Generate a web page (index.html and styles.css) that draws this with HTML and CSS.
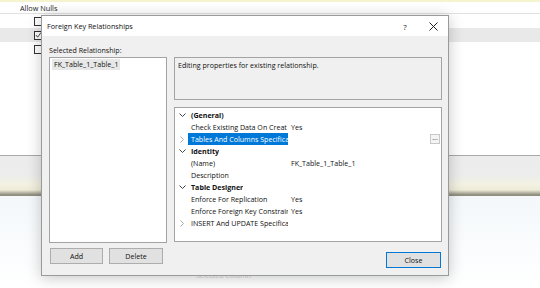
FILE: index.html
```html
<!DOCTYPE html>
<html>
<head>
<meta charset="utf-8">
<link rel="stylesheet" href="styles.css">
</head>
<body>
<div class="page">
  <div class="topline"></div>
  <div class="hdr"><span class="hdr-text">Allow Nulls</span></div>
  <div class="row"><span class="cb"></span></div>
  <div class="row sel"><span class="cb checked"><svg width="8" height="8" viewBox="0 0 8 8"><polyline points="1,4 3,6.5 7,1" fill="none" stroke="#333" stroke-width="1"/></svg></span></div>
  <div class="row"><span class="cb"></span></div>
  <div class="band"></div>
  <div class="lower"><span class="ghost">Selected Column</span></div>
</div>

<div class="dialog">
  <div class="titlebar">
    <span class="title">Foreign Key Relationships</span>
    <span class="tb-help">?</span>
    <span class="tb-close"><svg width="9" height="9" viewBox="0 0 9 9"><path d="M0.5 0.5 L8.5 8.5 M8.5 0.5 L0.5 8.5" stroke="#222" stroke-width="1"/></svg></span>
  </div>
  <div class="body">
    <div class="left">
      <div class="label">Selected Relationship:</div>
      <div class="listbox"><span class="item">FK_Table_1_Table_1</span></div>
      <div class="btnrow">
        <button class="btn">Add</button>
        <button class="btn">Delete</button>
      </div>
    </div>
    <div class="right">
      <div class="desc">Editing properties for existing relationship.</div>
      <div class="grid">
        <div class="prow cat"><span class="gut"><svg class="chev" width="7" height="5" viewBox="0 0 7 5"><polyline points="0.5,0.5 3.5,3.5 6.5,0.5" fill="none" stroke="#444" stroke-width="1"/></svg></span><span class="name">(General)</span></div>
        <div class="prow"><span class="gut"></span><span class="name">Check Existing Data On Creat</span><span class="val">Yes</span></div>
        <div class="prow"><span class="gut"><svg width="4" height="7" viewBox="0 0 4 7"><polyline points="0.5,0.5 3.5,3.5 0.5,6.5" fill="none" stroke="#aaa" stroke-width="1"/></svg></span><span class="name hl">Tables And Columns Specifica</span><span class="val"></span><span class="ell">...</span></div>
        <div class="prow cat"><span class="gut"><svg class="chev" width="7" height="5" viewBox="0 0 7 5"><polyline points="0.5,0.5 3.5,3.5 6.5,0.5" fill="none" stroke="#444" stroke-width="1"/></svg></span><span class="name">Identity</span></div>
        <div class="prow"><span class="gut"></span><span class="name">(Name)</span><span class="val">FK_Table_1_Table_1</span></div>
        <div class="prow"><span class="gut"></span><span class="name">Description</span><span class="val"></span></div>
        <div class="prow cat"><span class="gut"><svg class="chev" width="7" height="5" viewBox="0 0 7 5"><polyline points="0.5,0.5 3.5,3.5 6.5,0.5" fill="none" stroke="#444" stroke-width="1"/></svg></span><span class="name">Table Designer</span></div>
        <div class="prow"><span class="gut"></span><span class="name">Enforce For Replication</span><span class="val">Yes</span></div>
        <div class="prow"><span class="gut"></span><span class="name">Enforce Foreign Key Constrair</span><span class="val">Yes</span></div>
        <div class="prow"><span class="gut"><svg width="4" height="7" viewBox="0 0 4 7"><polyline points="0.5,0.5 3.5,3.5 0.5,6.5" fill="none" stroke="#aaa" stroke-width="1"/></svg></span><span class="name">INSERT And UPDATE Specifica</span><span class="val"></span></div>
      </div>
      <div class="closerow"><button class="btn close">Close</button></div>
    </div>
  </div>
</div>
</body>
</html>
```
FILE: styles.css
```css
* { box-sizing: border-box; }
html, body { margin: 0; padding: 0; }
body {
  width: 540px;
  height: 288px;
  overflow: hidden;
  background: #ffffff;
  font-family: "Open Sans", "Noto Sans", sans-serif;
  font-size: 7.1px;
  color: #111;
  position: relative;
}
.page { width: 540px; height: 288px; display: flex; flex-direction: column; }
.topline { height: 2px; background: #f4f4cf; }
.hdr { height: 12px; border-bottom: 1px solid #e2e2e2; padding-left: 20px; display: flex; align-items: center; }
.hdr-text { color: #222; font-size: 7.3px; }
.row { height: 14px; display: flex; align-items: center; padding-left: 34px; }
.row.sel { background: #e9e9e9; }
.cb { width: 9px; height: 9px; border: 1px solid #333; background: #fff; display: flex; align-items: center; justify-content: center; }
.band {
  margin-top: 99px;
  height: 41px;
  border-top: 1px solid #a8a8a8;
  background: linear-gradient(#ececec 0%, #ededed 50%, #f3f1e2 70%, #eeecd8 85%, #8f8e80 97%, #8f8e80 100%);
}
.lower { flex: 1; background: linear-gradient(#f4f8fb, #ffffff); padding-left: 196px; padding-top: 74px; }
.ghost { color: #d2d2d2; font-size: 7px; }

.dialog {
  position: absolute;
  left: 41px;
  top: 15px;
  width: 408px;
  height: 261px;
  border: 1px solid #9a9a9a;
  background: #f0f0f0;
  box-shadow: 0 2px 14px rgba(0,0,0,0.22);
  display: flex;
  flex-direction: column;
}
.titlebar {
  height: 20px;
  background: #ffffff;
  display: flex;
  align-items: center;
  padding-left: 5px;
}
.title { flex: 1; color: #111; font-size: 7.2px; }
.tb-help { width: 12px; text-align: center; margin-right: 16px; font-size: 8px; color: #222; }
.tb-close { width: 12px; display: flex; justify-content: center; margin-right: 9px; }

.body { flex: 1; display: flex; padding: 8px 6px 0 7px; gap: 7px; }
.left { width: 118px; display: flex; flex-direction: column; }
.label { height: 13px; line-height: 12px; padding-left: 0; }
.listbox { height: 186px; background: #fff; border: 1px solid #a3a3a3; padding: 1px 2px; }
.item { display: inline-block; background: #e8e8e8; padding: 0 2px; height: 11px; line-height: 11px; }
.btnrow { display: flex; gap: 6px; margin-top: 5px; padding-left: 1px; }
.btn {
  height: 16px;
  background: #e1e1e1;
  border: 1px solid #adadad;
  font-family: inherit;
  font-size: 7.1px;
  color: #111;
  padding: 0;
}
.btnrow .btn { width: 54px; }
.btnrow .btn:first-child { width: 53px; }

.right { width: 268px; display: flex; flex-direction: column; padding-top: 13px; }
.desc { height: 43px; border: 1px solid #a3a3a3; background: #f0f0f0; padding: 2px 3px; line-height: 11px; }
.grid { margin-top: 7px; height: 135px; border: 1px solid #a3a3a3; background: #fff; padding-top: 1px; }
.prow { height: 12px; display: flex; align-items: center; position: relative; }
.gut { width: 13px; height: 12px; display: flex; align-items: center; justify-content: center; padding-left: 1px; }
.name { width: 100px; height: 12px; line-height: 12px; padding-left: 3px; white-space: nowrap; overflow: hidden; }
.cat .name { font-weight: bold; width: auto; }
.name.hl { background: #0078d7; color: #fff; }
.val { padding-left: 3px; line-height: 12px; white-space: nowrap; }
.ell {
  position: absolute;
  right: 1px;
  top: 1px;
  width: 10px;
  height: 10px;
  border: 1px solid #c8c8c8;
  background: #f4f4f4;
  font-size: 7px;
  line-height: 6px;
  text-align: center;
  color: #333;
}
.closerow { display: flex; justify-content: flex-end; margin-top: 10px; padding-right: 1px; }
.btn.close { width: 55px; border-color: #0078d7; }
```
